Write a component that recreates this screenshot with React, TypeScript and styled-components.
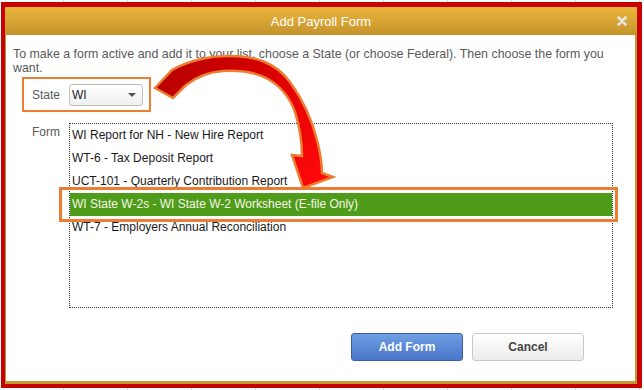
import React from 'react';
import styled, { createGlobalStyle } from 'styled-components';

const GlobalStyle = createGlobalStyle`
  html, body {
    margin: 0;
    padding: 0;
    background: #ffffff;
    font-family: "Liberation Sans", Arial, sans-serif;
  }
`;

const Page = styled.div`
  position: relative;
  width: 644px;
  height: 390px;
  padding: 2px 0 0 1px;
  box-sizing: border-box;
  background: repeating-linear-gradient(90deg, #ffffff 0 63px, #d8d8d8 63px 64px);
`;

const Frame = styled.div`
  width: 641px;
  height: 386px;
  box-sizing: border-box;
  border-style: solid;
  border-color: #c80000;
  border-width: 5px 5px 4px 4px;
  display: flex;
  flex-direction: column;
`;

const TitleBar = styled.div`
  height: 28px;
  flex-shrink: 0;
  display: grid;
  grid-template-columns: 1fr auto 1fr;
  align-items: center;
  background: linear-gradient(180deg, #e8b43a 0%, #d9a534 50%, #c3922c 100%);
  color: #ffffff;
  font-size: 13px;
`;

const Title = styled.div`
  grid-column: 2;
`;

const CloseBtn = styled.div`
  justify-self: end;
  margin-right: 10px;
  display: flex;
`;

const Body = styled.div`
  flex: 1;
  background: #ffffff;
  border-style: solid;
  border-color: #c3962e;
  border-width: 0 2px 3px 1px;
  padding: 12px 7px 0 7px;
  display: flex;
  flex-direction: column;
`;

const Intro = styled.p`
  margin: 0;
  font-size: 12.4px;
  line-height: 14px;
  color: #595959;
`;

const StateBox = styled.div`
  align-self: flex-start;
  margin: 2px 0 0 9px;
  border: 2px solid #ed7d31;
  padding: 5px 6px 4px 8px;
  display: flex;
  align-items: center;
`;

const Label = styled.div<{ $top?: number }>`
  width: 37px;
  flex-shrink: 0;
  font-size: 12px;
  line-height: 14px;
  color: #595959;
  padding-top: ${p => p.$top ?? 0}px;
`;

const Select = styled.div`
  width: 74px;
  height: 22px;
  box-sizing: border-box;
  border: 1px solid #bdbdbd;
  border-radius: 3px;
  background: linear-gradient(180deg, #ffffff 0%, #f0f0f0 100%);
  display: flex;
  align-items: center;
  justify-content: space-between;
  padding: 0 6px 0 2px;
  font-size: 12px;
  color: #1a1a1a;
`;

const Caret = styled.span`
  width: 0;
  height: 0;
  border-left: 4px solid transparent;
  border-right: 4px solid transparent;
  border-top: 4px solid #555;
`;

const FormRow = styled.div`
  margin-top: 11px;
  padding-left: 19px;
  display: flex;
`;

const List = styled.div`
  width: 544px;
  height: 185px;
  box-sizing: border-box;
  border: 1px dotted #333;
  display: flex;
  flex-direction: column;
`;

const Item = styled.div<{ $selected?: boolean }>`
  position: relative;
  height: 23px;
  line-height: 23px;
  padding-left: 2px;
  font-size: 12px;
  color: ${p => (p.$selected ? '#f6f6e6' : '#1a1a1a')};
  background: ${p => (p.$selected ? '#4f9c1b' : 'transparent')};

  ${p =>
    p.$selected &&
    `
    &::after {
      content: '';
      position: absolute;
      left: -11px;
      right: -6px;
      top: -6px;
      bottom: -6px;
      border: 3px solid #ed7d31;
    }
  `}
`;

const ButtonRow = styled.div`
  margin-top: 25px;
  padding-right: 44px;
  display: flex;
  justify-content: flex-end;
  gap: 9px;
`;

const Button = styled.button<{ $primary?: boolean }>`
  width: 112px;
  height: 28px;
  border-radius: 3px;
  font-family: "Liberation Sans", Arial, sans-serif;
  font-size: 12px;
  font-weight: bold;
  cursor: pointer;
  border: 1px solid ${p => (p.$primary ? '#3a5ea6' : '#c9c9c9')};
  color: ${p => (p.$primary ? '#ffffff' : '#444444')};
  background: ${p =>
    p.$primary
      ? 'linear-gradient(180deg, #6e9ee2 0%, #4a76ca 100%)'
      : 'linear-gradient(180deg, #ffffff 0%, #ececec 100%)'};
`;

const ArrowLayer = styled.svg`
  position: absolute;
  left: 0;
  top: 0;
  pointer-events: none;
`;

const forms = [
  'WI Report for NH - New Hire Report',
  'WT-6 - Tax Deposit Report',
  'UCT-101 - Quarterly Contribution Report',
  'WI State W-2s - WI State W-2 Worksheet (E-file Only)',
  'WT-7 - Employers Annual Reconciliation',
];

export default function App() {
  return (
    <>
      <GlobalStyle />
      <Page>
        <Frame>
          <TitleBar>
            <Title>Add Payroll Form</Title>
            <CloseBtn>
              <svg width="10" height="10" viewBox="0 0 10 10">
                <path d="M1.5 1.5 L8.5 8.5 M8.5 1.5 L1.5 8.5" stroke="#e6e6e6" strokeWidth="2.6" strokeLinecap="round" />
              </svg>
            </CloseBtn>
          </TitleBar>
          <Body>
            <Intro>
              To make a form active and add it to your list, choose a State (or choose Federal). Then choose the form you want.
            </Intro>

            {/* state picker with the orange call-out */}
            <StateBox>
              <Label>State</Label>
              <Select>
                WI
                <Caret />
              </Select>
            </StateBox>

            <FormRow>
              <Label $top={2}>Form</Label>
              <List>
                {forms.map((f, i) => (
                  <Item key={f} $selected={i === 3}>
                    {f}
                  </Item>
                ))}
              </List>
            </FormRow>

            <ButtonRow>
              <Button $primary>Add Form</Button>
              <Button>Cancel</Button>
            </ButtonRow>
          </Body>
        </Frame>

        {/* curved call-out arrow */}
        <ArrowLayer width="644" height="390" viewBox="0 0 644 390">
          <defs>
            <linearGradient id="arrowFill" x1="160" y1="70" x2="320" y2="180" gradientUnits="userSpaceOnUse">
              <stop offset="0" stopColor="#b80000" />
              <stop offset="0.45" stopColor="#d80000" />
              <stop offset="1" stopColor="#ff0a0a" />
            </linearGradient>
          </defs>
          <path
            d="M155 88 L172 70 C190 60 208 56 230 56 C255 56 275 62 290 82 C303 100 312 120 317 140 C320 152 322 163 322 173 L333 177 L303 188 L292 155 L302 156 C302 145 300 128 295 112 C290 98 282 87 268 79 C255 72 240 70 223 71 C208 72 195 78 186 85 L173 98 Z"
            fill="url(#arrowFill)"
            stroke="#ed7d31"
            strokeWidth="2.5"
            strokeLinejoin="miter"
          />
        </ArrowLayer>
      </Page>
    </>
  );
}
